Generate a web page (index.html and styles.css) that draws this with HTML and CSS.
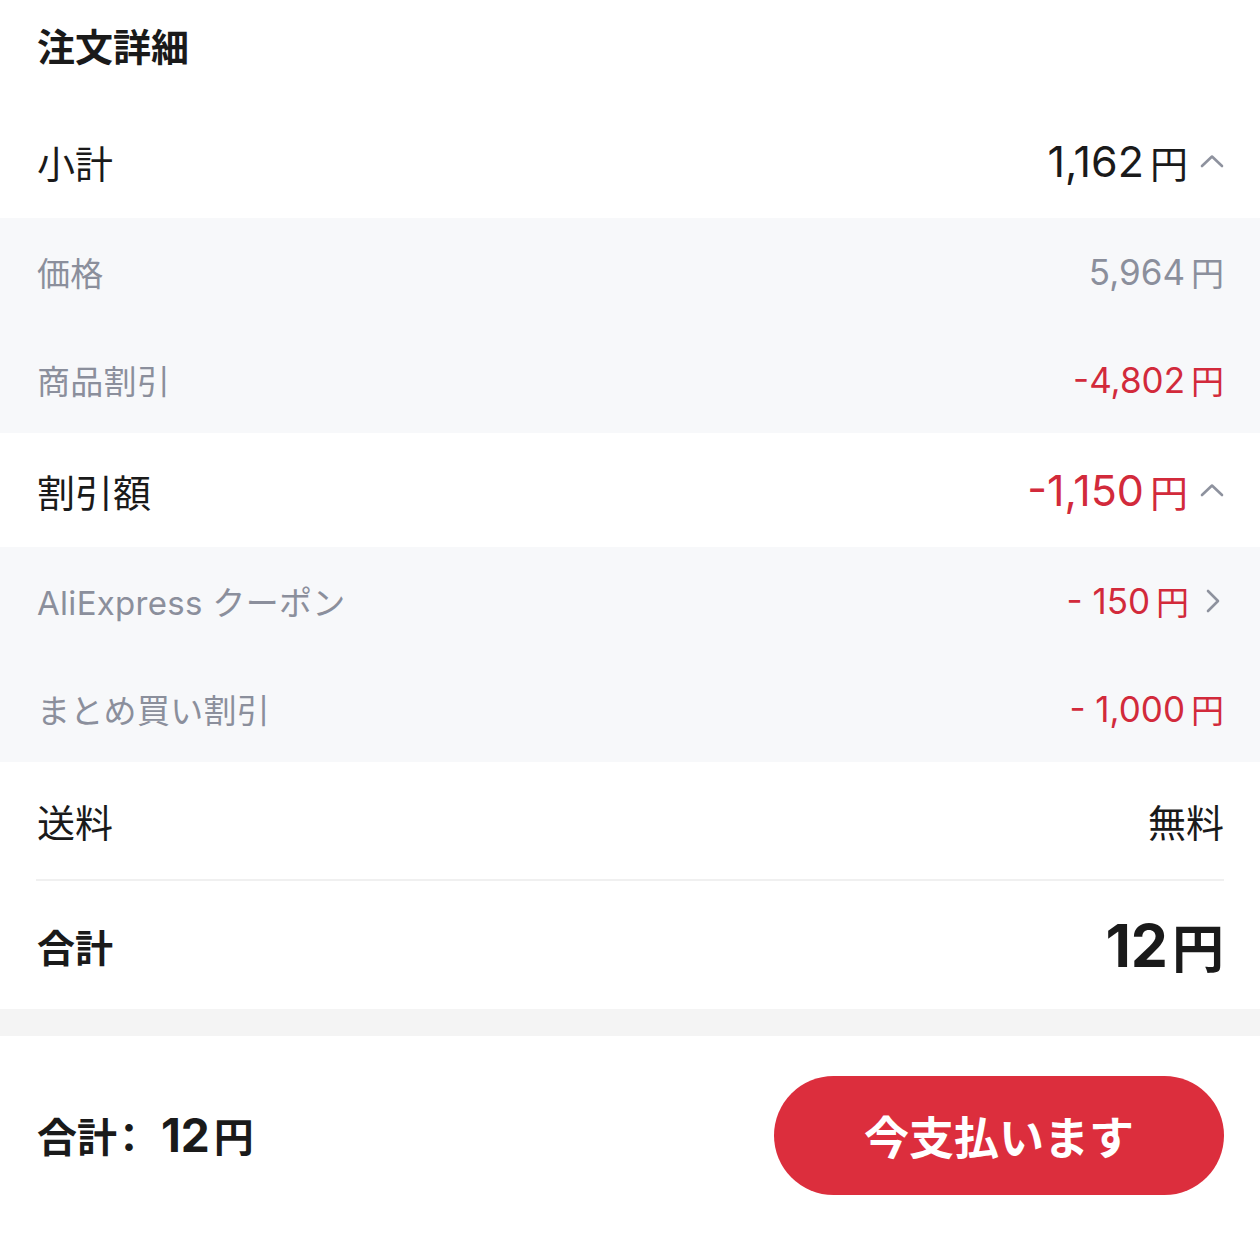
FILE: index.html
```html
<!DOCTYPE html>
<html lang="ja">
<head>
    <meta charset="UTF-8">
    <meta name="viewport" content="width=device-width, initial-scale=1.0">
    <title>注文詳細</title>
    <link rel="stylesheet" href="styles.css">
</head>
<body>
    <div class="order-detail">
        <div class="order-header">
            <h1>注文詳細</h1>
        </div>

        <div class="row main-row subtotal-row">
            <span class="label">小計</span>
            <span class="amount">
                <span class="num">1,162</span><span class="yen">円</span>
                <svg class="chevron" width="24" height="14" viewBox="0 0 24 14"><path d="M2 12 L12 2.5 L22 12" fill="none" stroke="#8e929e" stroke-width="2.6" stroke-linecap="round" stroke-linejoin="round"/></svg>
            </span>
        </div>
        <div class="sub-group">
            <div class="row sub-row">
                <span class="label">価格</span>
                <span class="amount"><span class="num">5,964</span><span class="yen">円</span></span>
            </div>
            <div class="row sub-row">
                <span class="label">商品割引</span>
                <span class="amount red"><span class="num">-4,802</span><span class="yen">円</span></span>
            </div>
        </div>

        <div class="row main-row discount-row">
            <span class="label">割引額</span>
            <span class="amount red">
                <span class="num">-1,150</span><span class="yen">円</span>
                <svg class="chevron" width="24" height="14" viewBox="0 0 24 14"><path d="M2 12 L12 2.5 L22 12" fill="none" stroke="#8e929e" stroke-width="2.6" stroke-linecap="round" stroke-linejoin="round"/></svg>
            </span>
        </div>
        <div class="sub-group">
            <div class="row sub-row">
                <span class="label">AliExpress クーポン</span>
                <span class="amount red">
                    <span class="num">- 150</span><span class="yen">円</span>
                    <svg class="chevron right" width="24" height="24" viewBox="0 0 24 24"><path d="M7 2 L17 12 L7 22" fill="none" stroke="#8e929e" stroke-width="2.6" stroke-linecap="round" stroke-linejoin="round"/></svg>
                </span>
            </div>
            <div class="row sub-row">
                <span class="label">まとめ買い割引</span>
                <span class="amount red"><span class="num">- 1,000</span><span class="yen">円</span></span>
            </div>
        </div>

        <div class="row main-row shipping-row">
            <span class="label">送料</span>
            <span class="amount">無料</span>
        </div>
        <div class="divider"></div>
        <div class="row total-row">
            <span class="label">合計</span>
            <span class="amount"><span class="num">12</span><span class="yen">円</span></span>
        </div>
    </div>

    <div class="spacer"></div>

    <div class="checkout-bar">
        <div class="checkout-total">合計<span class="colon">：</span><span class="num">12</span><span class="yen">円</span></div>
        <button class="pay-button">今支払います</button>
    </div>
</body>
</html>
```

FILE: styles.css
```css
* {
    margin: 0;
    padding: 0;
    box-sizing: border-box;
}

body {
    font-family: Inter, "Noto Sans CJK JP", sans-serif;
    background: #fff;
    color: #1a1a1a;
    width: 1260px;
}

.order-header {
    height: 110px;
    padding: 20px 37px 0;
}

.order-header h1 {
    font-size: 38px;
    font-weight: 700;
    line-height: 54px;
    color: #1a1a1a;
}

.row {
    display: flex;
    align-items: center;
    justify-content: space-between;
    padding: 0 36px 0 37px;
}

.main-row {
    height: 108px;
    font-size: 38px;
}

.main-row .num {
    font-size: 43px;
}

.subtotal-row {
    padding-bottom: 6px;
}

.discount-row {
    height: 114px;
}

.shipping-row {
    height: 117px;
}

.sub-group {
    background: #f7f8fa;
}

.sub-row {
    height: 108px;
    font-size: 33px;
    color: #8b8f9c;
}

.sub-row .label {
    letter-spacing: 0.3px;
}

.sub-row .num {
    font-size: 35px;
}

.sub-row + .sub-row {
    height: 107px;
}

.amount {
    display: flex;
    align-items: center;
    gap: 12px;
}

.amount .yen {
    margin-left: -6px;
}

.red {
    color: #d22a3b;
}

.chevron {
    display: block;
    flex-shrink: 0;
}

.chevron.right {
    margin-right: -1px;
}

.divider {
    height: 2px;
    margin: 0 36px;
    background: #f0f0f0;
}

.total-row {
    height: 128px;
    font-size: 38px;
    font-weight: 700;
}

.total-row .num {
    font-size: 59px;
}

.total-row .yen {
    font-size: 52px;
    margin-left: -8px;
}

.spacer {
    height: 27px;
    background: #f4f4f4;
}

.checkout-bar {
    display: flex;
    align-items: flex-start;
    justify-content: space-between;
    padding: 40px 36px 0 37px;
    height: 215px;
}

.checkout-total {
    font-size: 40px;
    font-weight: 700;
    line-height: 119px;
}

.checkout-total .colon {
    font-family: "Noto Sans CJK JP", sans-serif;
    font-feature-settings: "halt";
    margin-left: 2px;
}

.checkout-total .num {
    font-size: 46px;
    margin-left: 22px;
}

.checkout-total .yen {
    margin-left: 4px;
}

.pay-button {
    width: 450px;
    height: 119px;
    border: none;
    border-radius: 60px;
    background: #dc2e3d;
    color: #fff;
    font-family: Inter, "Noto Sans CJK JP", sans-serif;
    font-size: 45px;
    font-weight: 700;
}
```
